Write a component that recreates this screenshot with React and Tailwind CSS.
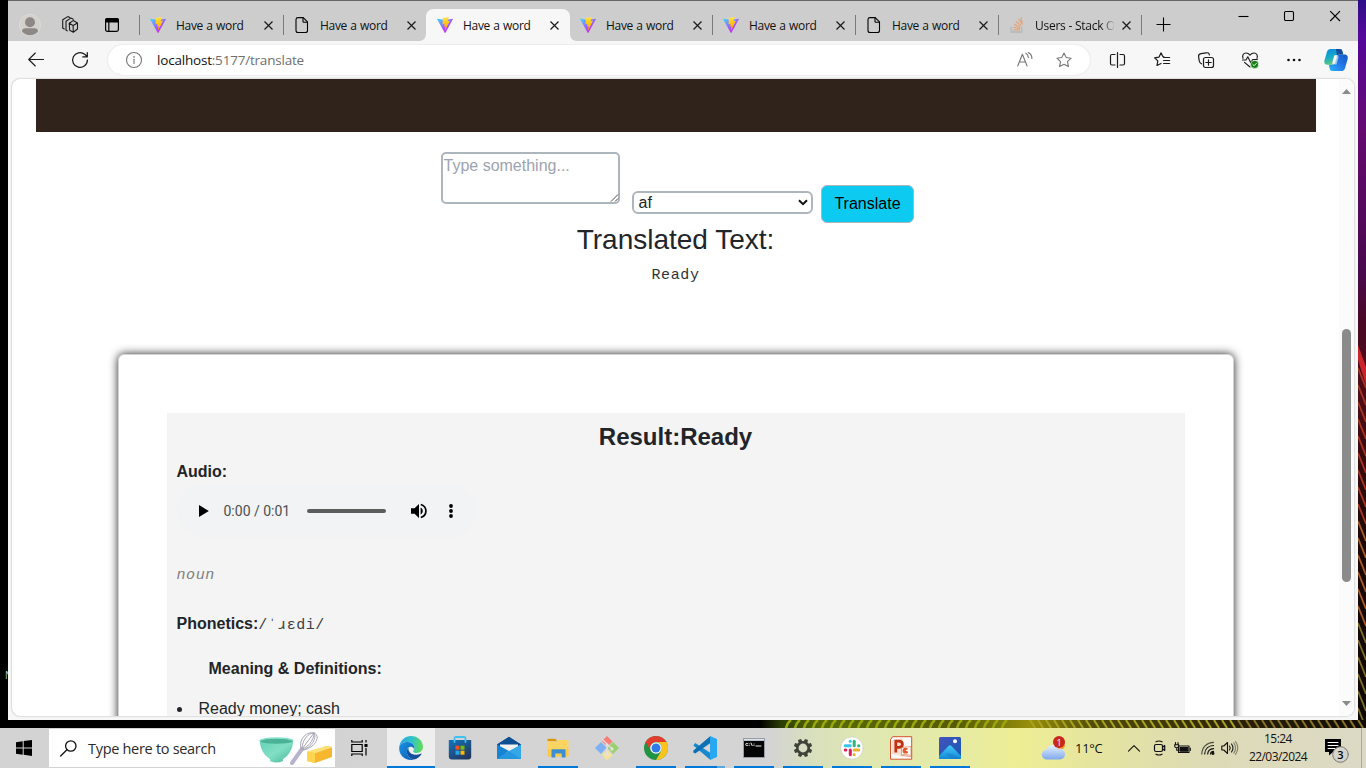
import React from "react";

function Svg({ w = 20, h = w, vb, className = "", children, ...rest }) {
  return (
    <svg
      width={w}
      height={h}
      viewBox={vb || `0 0 ${w} ${h}`}
      fill="none"
      stroke="currentColor"
      strokeWidth="1.1"
      strokeLinecap="round"
      strokeLinejoin="round"
      className={"block shrink-0 overflow-visible " + className}
      {...rest}
    >
      {children}
    </svg>
  );
}

/* ---------- favicons ---------- */

function ViteIcon() {
  return (
    <Svg w={16} vb="0 0 256 257" stroke="none">
      <defs>
        <linearGradient id="viteBody" x1="-.8%" x2="57.6%" y1="7.7%" y2="78.4%">
          <stop offset="0" stopColor="#41d1ff" />
          <stop offset="1" stopColor="#bd34fe" />
        </linearGradient>
        <linearGradient id="viteBolt" x1="43.4%" x2="50.3%" y1="2.2%" y2="89%">
          <stop offset="0" stopColor="#ffea83" />
          <stop offset=".083" stopColor="#ffdd35" />
          <stop offset="1" stopColor="#ffa800" />
        </linearGradient>
      </defs>
      <path
        fill="url(#viteBody)"
        d="M255.153 37.938L134.897 252.976c-2.483 4.44-8.862 4.466-11.382.048L.875 37.958c-2.746-4.814 1.371-10.646 6.827-9.67l120.385 21.517a6.537 6.537 0 0 0 2.322-.004l117.867-21.483c5.438-.991 9.574 4.796 6.877 9.62Z"
      />
      <path
        fill="url(#viteBolt)"
        d="M185.432.063L96.44 17.501a3.268 3.268 0 0 0-2.634 3.014l-5.474 92.456a3.268 3.268 0 0 0 3.997 3.378l24.777-5.718c2.318-.535 4.413 1.507 3.936 3.838l-7.361 36.047c-.495 2.426 1.782 4.5 4.151 3.78l15.304-4.649c2.372-.72 4.652 1.36 4.15 3.788l-11.698 56.621c-.732 3.542 3.979 5.473 5.943 2.437l1.313-2.028l72.516-144.72c1.215-2.423-.88-5.186-3.54-4.672l-25.505 4.922c-2.396.462-4.435-1.77-3.759-4.114l16.646-57.705c.677-2.35-1.37-4.583-3.769-4.113Z"
      />
    </Svg>
  );
}

function DocIcon() {
  return (
    <Svg w={16} className="text-black">
      <path d="M4 .6h5.2l4.3 4.3v8.6a2 2 0 0 1-2 2H4a2 2 0 0 1-2-2v-11a2 2 0 0 1 2-1.9Z" />
      <path d="M9 .8v3.6a.8.8 0 0 0 .8.8h3.500" />
    </Svg>
  );
}

function StackIcon() {
  return (
    <Svg w={16} strokeLinecap="butt" strokeWidth="1.3">
      <path stroke="#b4b6b8" d="M2.200 10v5h10.600v-5" />
      <path stroke="#e2a67b" d="M4.200 12.800h6.800M4.400 10.200l6.700 1.300M5.200 7.300l6.200 2.800M6.900 4.400l5.300 4.200M9.500 2l4.100 5.300M12 .300l1.200 6.200" />
    </Svg>
  );
}

function CloseX() {
  return (
    <Svg w={9} strokeWidth="1.2" strokeLinecap="butt" className="text-[#1a1a1a]">
      <path d="M.5.500l8 8M8.500.500l-8 8" />
    </Svg>
  );
}

/* ---------- browser chrome ---------- */

const tabs = [
  { icon: "vite", title: "Have a word", divider: true, first: true },
  { icon: "doc", title: "Have a word", divider: true },
  { icon: "vite", title: "Have a word", active: true },
  { icon: "vite", title: "Have a word" },
  { icon: "vite", title: "Have a word", divider: true },
  { icon: "doc", title: "Have a word", divider: true },
  { icon: "stack", title: "Users - Stack O", divider: true, fade: true },
];

function Tab({ icon, title, divider, first, active, fade }) {
  return (
    <div className={"relative flex h-8 shrink-0 items-center " + (first ? "w-36" : "w-[143px]")}>
      {active && (
        <svg className="absolute -left-2 top-0" width="160" height="32" viewBox="0 0 160 32">
          <path
            fill="#f7f7f7"
            d="M0 32c5.500 0 8-2.500 8-8V8c0-5 3-8 8-8h128c5 0 8 3 8 8v16c0 5.500 2.500 8 8 8Z"
          />
        </svg>
      )}
      <div className={"h-5 w-px shrink-0 " + (divider ? "bg-[#7a7a7a]" : "bg-transparent")} />
      <div className="relative ml-[10px] flex h-4 w-4 shrink-0 items-center justify-center">
        {icon === "vite" && <ViteIcon />}
        {icon === "doc" && <DocIcon />}
        {icon === "stack" && <StackIcon />}
      </div>
      <div className="relative ml-[10px] mt-px flex h-[18px] w-[79px] shrink-0 items-center overflow-hidden whitespace-nowrap font-['Open_Sans','Noto_Sans',sans-serif] text-[12px] leading-[18px] text-[#111]">
        {fade ? (
          <span className="bg-gradient-to-r from-[#111] from-82% to-[#cdcdcd] bg-clip-text tracking-[-0.25px] text-transparent">
            {title}
          </span>
        ) : (
          <span className="tracking-[-0.3px] [word-spacing:0.5px]">{title}</span>
        )}
      </div>
      <div className={"relative " + (first ? "ml-[9px]" : "ml-[8px]")}>
        <CloseX />
      </div>
    </div>
  );
}

function TabStrip() {
  return (
    <div className="flex h-10 shrink-0 items-start bg-[#cdcdcd]">
      <div className="flex w-11 justify-center pt-[13px]">
        <Svg w={22} stroke="none">
          <circle cx="11" cy="11" r="10.600" fill="#d4d1cd" stroke="#dedcd9" strokeWidth=".8" />
          <circle cx="11" cy="8.300" r="5" fill="#8c8885" />
          <path d="M3 17.600c0-2.400 1.400-3.300 3.600-3.300h8.800c2.200 0 3.600.9 3.600 3.300a10.500 10.500 0 0 1-16 0Z" fill="#8c8885" />
        </Svg>
      </div>
      <div className="flex w-9 justify-center pt-[15px]">
        <Svg w={18} className="text-[#1a1a1a]">
          <path d="M8.200 7.200l4-2.600 4.300 2.400v6l-4.200 3.200-3.600-2L8.200 7.200Zm0 0l3.900 2.300 4.400-2.500M12.100 9.500l.2 6.700" />
          <path d="M6.300 14.900L5 14V5.300L9.800 2.100l2.500 1.200M3.300 13L1.700 12V3.800L6.800.600l2 .9" />
        </Svg>
      </div>
      <div className="flex w-12 justify-center pt-[17px]">
        <Svg w={14} strokeWidth="1.2" className="text-black">
          <rect x=".6" y=".6" width="12.800" height="12.800" rx="1.800" />
          <path d="M.6 1.800Q.8.600 2 .600h10q1.200 0 1.400 1.200V4H.6Z" fill="currentColor" />
          <path d="M3.800 4v9" />
        </Svg>
      </div>
      <div className="ml-[3px] flex pt-2">
        {tabs.map((t, i) => (
          <Tab key={i} {...t} />
        ))}
      </div>
      <div className="mt-[14px] h-5 w-px bg-[#7a7a7a]" />
      <Svg w={14} className="ml-[14px] mt-[16px] text-black" strokeLinecap="butt">
        <path d="M7.500 .500v14M.5 7.500h14" />
      </Svg>
      <div className="ml-auto flex items-start pr-px text-black">
        <div className="flex h-[30px] w-[46px] items-center justify-center">
          <Svg w={10} strokeLinecap="butt">
            <path d="M-.500 5.500h10" />
          </Svg>
        </div>
        <div className="flex h-[30px] w-[46px] items-center justify-center">
          <Svg w={10}>
            <rect x="-.500" y=".5" width="9" height="9" rx="1.200" />
          </Svg>
        </div>
        <div className="flex h-[30px] w-[44px] items-center justify-center">
          <Svg w={10} strokeLinecap="butt">
            <path d="M.2.200l9.800 9.800M10 .200L.2 10" />
          </Svg>
        </div>
      </div>
    </div>
  );
}

function ToolCell({ children }) {
  return <div className="flex h-9 w-11 shrink-0 items-center justify-center text-[#1b1b1b]">{children}</div>;
}

const starPath = "M8 1l2.200 4.500 4.900.700-3.600 3.500.9 4.900L8 12.300l-4.400 2.300.9-4.900L.9 6.200l4.900-.7L8 1Z";

function Toolbar() {
  return (
    <div className="flex h-[38px] shrink-0 items-center bg-[#f7f7f7] pl-[6px]">
      <ToolCell>
        <Svg w={16}>
          <path d="M15.500 7.500H.7M7.300 1L.7 7.500l6.600 6.500" />
        </Svg>
      </ToolCell>
      <ToolCell>
        <Svg w={16} strokeWidth="1.250">
          <path d="M15.400 8A7.400 7.400 0 1 1 12.700 2.300L15.300 4.700M15.300.500v4.400h-4.500" />
        </Svg>
      </ToolCell>
      <div className="ml-[6px] flex h-[30px] w-[982px] shrink-0 items-center rounded-full bg-white shadow-[0_0_2px_rgba(0,0,0,0.14)]">
        <Svg w={16} className="ml-[18px] text-[#767676]">
          <circle cx="8" cy="8" r="7.500" />
          <path d="M8 7.200v4.300" />
          <circle cx="8" cy="4.900" r=".8" fill="currentColor" stroke="none" />
        </Svg>
        <div className="ml-[15px] font-['Open_Sans','Noto_Sans',sans-serif] text-[13.5px] leading-5 tracking-[-0.2px] text-[#6f6f6f]">
          <span className="text-[#111]">localhost</span>:5177/translate
        </div>
        <Svg w={16} className="ml-auto text-[#767676]">
          <path d="M.7 14L5.400 2.300 10.100 14M2.300 10h6.200M8.900 1.200c1.500.8 2.400 2.300 2.400 4.200M11.200.500c2.300 1.100 3.700 3.400 3.700 5.900" />
        </Svg>
        <Svg w={16} className="ml-[23px] mr-[18px] text-[#767676]">
          <path d={starPath} />
        </Svg>
      </div>
      <div className="ml-[6px] flex">
        <ToolCell>
          <Svg w={16}>
            <path d="M5 2.500H2Q.5 2.500.5 4v7.500q0 1.500 1.500 1.500h3M10 2.500h3q1.500 0 1.500 1.500v7.500q0 1.500-1.500 1.500h-3M7.500 .500v15" strokeWidth="1.200" />
          </Svg>
        </ToolCell>
        <ToolCell>
          <Svg w={16}>
            <path d="M10 4.900L9 4.700 7 .900 4.900 5.200l-4.300.6 3.200 3.100-.8 4.600 4-2M9.600 8.500h6M9.600 11.500h6M9.600 5.500h6" strokeWidth="1.200" />
          </Svg>
        </ToolCell>
        <ToolCell>
          <Svg w={16}>
            <rect x="5.500" y="5.500" width="10" height="10" rx="2" strokeWidth="1.200" />
            <path d="M10.500 7.800v5.400M7.800 10.500h5.400M3.600 11.800C2 11.500 1.600 10.500 1.300 9.200L.6 4.900C.3 3 1.300 2 3 1.700L8.300.800c1.700-.3 2.800.3 3.100 2.200" strokeWidth="1.200" />
          </Svg>
        </ToolCell>
        <ToolCell>
          <Svg w={16}>
            <path d="M1 6.300C-.2 3.200 1.600 1 4 1c2 0 3.200 1.100 4 2.100C8.800 2.100 10 1 12 1c2.400 0 4.200 2.200 3 5.300M.5 8H4l1.800-3.200 3 6L10.700 7.500h4.600M2.500 10.400L8 15" strokeWidth="1.150" />
            <circle cx="12.600" cy="12.400" r="4" fill="#128012" stroke="#f7f7f7" strokeWidth=".6" />
            <path d="M10.900 12.600l1.200 1.100 2.200-2.300" stroke="#fff" strokeWidth="1" />
          </Svg>
        </ToolCell>
        <ToolCell>
          <Svg w={16} stroke="none">
            <circle cx="2.500" cy="8" r="1.300" fill="#111" />
            <circle cx="8" cy="8" r="1.300" fill="#111" />
            <circle cx="13.500" cy="8" r="1.300" fill="#111" />
          </Svg>
        </ToolCell>
        <div className="flex w-10 items-center justify-center">
          <CopilotIcon />
        </div>
      </div>
    </div>
  );
}

function CopilotIcon() {
  return (
    <Svg w={24} stroke="none">
      <defs>
        <linearGradient id="copA" x1="0" x2=".3" y1="0" y2="1">
          <stop offset="0" stopColor="#0d88dd" />
          <stop offset=".55" stopColor="#16abc9" />
          <stop offset="1" stopColor="#5ec97a" />
        </linearGradient>
        <linearGradient id="copB" x1="1" x2="0" y1="0" y2="1">
          <stop offset="0" stopColor="#1456c4" />
          <stop offset=".5" stopColor="#2279ea" />
          <stop offset="1" stopColor="#29b5f6" />
        </linearGradient>
      </defs>
      <path d="M6.500 1h9.200c1.400 0 2.200.8 2.600 2.200l.9 3.300h-3.500c-1.800 0-2.700.8-3.200 2.600L11 14.300c-.5 1.700-1.500 2.400-3.200 2.400H3.300C.8 16.700-.2 14.700.5 12.200L3 3.800C3.600 1.900 4.800 1 6.500 1Z" fill="url(#copA)" />
      <path d="M17.500 23H8.300c-1.400 0-2.200-.8-2.600-2.200l-.9-4.100h3.500c1.800 0 2.700-.8 3.200-2.600L13 9.500c.5-1.900 1.500-2.900 3.200-2.900h4.500c2.500 0 3.600 2.200 2.900 4.700L21 20.200c-.6 1.900-1.800 2.800-3.500 2.800Z" fill="url(#copB)" />
      <path d="M12 1h3.900c1.400 0 2.200.8 2.500 2.200l.9 3.400h-3.500c-1.500 0-2.300.5-2.800 1.400Z" fill="#174c9c" />
      <path d="M10.300 7.200h2.900l-2.600 8.600H8Z" fill="#f7f7f7" />
      <path d="M13.200 8.500h1.600l-2.400 8h-1.800Z" fill="#f7f7f7" opacity=".6" />
    </Svg>
  );
}

/* ---------- web page ---------- */

function TranslateForm() {
  return (
    <div className="flex pt-5">
      <div className="ml-[429px] flex h-[52px] w-[179px] justify-between rounded-[5px] border-2 border-[#adb5bd] bg-white pl-[0.5px]">
        <span className="h-6 text-[16px] leading-[23px] text-[#9ca3af]">Type something...</span>
        <Svg w={9} className="mr-[-0.5px] self-end text-[#333]" strokeWidth=".9" strokeLinecap="butt">
          <path d="M1 8.500l7-7M5 8.500l3-3" />
        </Svg>
      </div>
      <div className="ml-3 mt-[39px] flex h-[23px] w-[181px] items-center justify-between rounded-[6px] border-2 border-[#adb5bd] bg-white pl-[4.5px] pr-[3px] text-[16px] leading-[19px] text-[#212529]">
        <span>af</span>
        <Svg w={10} h={6} strokeWidth="2" strokeLinecap="butt" strokeLinejoin="miter" className="text-[#111]">
          <path d="M1 .200l4 4 4-4" />
        </Svg>
      </div>
      <div className="ml-2 mt-[33px] flex h-[38px] w-[93px] items-center justify-center rounded-[6px] border border-[#adb5bd] bg-[#0dcaf0] text-[16px] text-black">
        Translate
      </div>
    </div>
  );
}

function AudioPlayer() {
  return (
    <div className="flex h-[54px] w-[300px] items-center rounded-full bg-[#f1f3f4]">
      <svg className="ml-[22px] block" width="10" height="12" viewBox="0 0 10 12">
        <path d="M0 0v12l9.800-6Z" fill="#000" />
      </svg>
      <span className="ml-[15px] w-[67px] whitespace-nowrap font-[Roboto,sans-serif] text-[14px] leading-5 text-[#4c4f51]">0:00 / 0:01</span>
      <div className="ml-[16px] h-1 w-[79px] rounded-full bg-[#5b5d5d]" />
      <svg className="ml-[24px] block" width="18" height="18" viewBox="0 0 18 18">
        <path d="M1 6.300v5.400h3.600L9 16V2L4.600 6.300Z" fill="#000" />
        <path d="M10.600 5.600c2.900 1.300 2.900 5.500 0 6.800Z" fill="#000" />
        <path d="M10.800 2.500c6.800 2.200 6.800 10.800 0 13" fill="none" stroke="#000" strokeWidth="1.700" />
      </svg>
      <svg className="ml-[21px] block" width="4" height="14" viewBox="0 0 4 14">
        <circle cx="2" cy="2" r="1.900" />
        <circle cx="2" cy="7" r="1.900" />
        <circle cx="2" cy="12" r="1.900" />
      </svg>
    </div>
  );
}

function ResultCard() {
  return (
    <div className="ml-[106px] mt-[66px] h-[700px] w-[1116px] shrink-0 rounded-[6px] border border-[#d0d2d4] bg-white px-12 pt-[58px] shadow-[0_0_10px_rgba(0,0,0,0.85)]">
      <div className="h-[600px] bg-[#f4f4f4] pl-[9.5px] pr-[10.5px] pt-[9px]">
        <h2 className="h-[29px] text-center text-[24px] font-bold leading-[29px]">Result:Ready</h2>
        <div className="mt-[9px] h-6 text-[16px] font-bold leading-6">Audio:</div>
        <AudioPlayer />
        <div className="mt-[26px] h-6 font-['Liberation_Mono',monospace] text-[15px] italic leading-6 tracking-[0.6px] text-[#808080]">noun</div>
        <div className="mt-6 h-6 text-[16px] leading-6">
          <span className="font-bold">Phonetics:</span>
          <span className="font-['Liberation_Mono',monospace] text-[15px] tracking-[0.5px] text-[#3c4043]">/ˈɹɛdi/</span>
        </div>
        <div className="mt-[21px] h-6 pl-8 text-[16px] font-bold leading-6">Meaning &amp; Definitions:</div>
        <div className="mt-4 flex h-6 items-center text-[16px] leading-6">
          <span className="mt-px h-[5px] w-[5px] rounded-full bg-[#212529]" />
          <span className="ml-[17px]">Ready money; cash</span>
        </div>
      </div>
    </div>
  );
}

function Page() {
  return (
    <div className="mx-1 mb-1 flex h-[637px] overflow-hidden rounded-lg bg-white shadow-[0_0_2px_rgba(0,0,0,0.35)]">
      <div className="flex h-[637px] w-[1327px] shrink-0 flex-col overflow-hidden font-['Liberation_Sans',Arial,sans-serif] text-[#212529]">
        <div className="mx-6 h-[53px] w-[1280px] shrink-0 bg-[#30231c]" />
        <TranslateForm />
        <h2 className="h-[34px] text-center text-[28px] leading-[34px]">Translated Text:</h2>
        <div className="mt-[7px] h-6 text-center font-['Liberation_Mono',monospace] text-[15px] leading-6 tracking-[0.6px] text-[#303438]">Ready</div>
        <ResultCard />
      </div>
      <div className="flex h-full w-[15px] shrink-0 flex-col items-center bg-[#fbfbfb]">
        <svg className="mt-[10px] block" width="9" height="5" viewBox="0 0 9 5">
          <path d="M0 5L4.500 0 9 5Z" fill="#8b8b8b" />
        </svg>
        <div className="mt-[235px] h-[253px] w-[9px] rounded-full bg-[#8b8b8b]" />
        <svg className="mt-[119px] block" width="9" height="5" viewBox="0 0 9 5">
          <path d="M0 0h9L4.500 5Z" fill="#8b8b8b" />
        </svg>
      </div>
    </div>
  );
}

/* ---------- desktop wallpaper slivers ---------- */

function RightWallpaper() {
  return (
    <svg className="block h-[720px] w-2 shrink-0" viewBox="0 0 8 720" preserveAspectRatio="none">
      <defs>
        <linearGradient id="wallR" x1="0" x2="0" y1="0" y2="1">
          <stop offset="0" stopColor="#2d0f86" />
          <stop offset=".05" stopColor="#54089a" />
          <stop offset=".18" stopColor="#640a70" />
          <stop offset=".38" stopColor="#480a4c" />
          <stop offset=".45" stopColor="#4a0824" />
          <stop offset=".55" stopColor="#4d0d17" />
          <stop offset=".75" stopColor="#1d0805" />
          <stop offset="1" stopColor="#0c0903" />
        </linearGradient>
      </defs>
      <rect width="8" height="720" fill="url(#wallR)" />
      <path d="M0 345l8 22v18l-8-25Z" fill="#c9252b" />
      {Array.from({ length: 21 }, (_, i) => {
        const y = 368 + i * 17;
        return <path key={i} d={`M0 ${y}L8 ${y + 20}`} stroke={i < 9 ? "#a83422" : i < 15 ? "#a55a28" : "#7d6c29"} strokeWidth="1.800" />;
      })}
    </svg>
  );
}

function BottomWallpaper() {
  return (
    <svg className="block h-2 w-full shrink-0" viewBox="0 0 1366 8" preserveAspectRatio="none">
      <defs>
        <linearGradient id="wallB" x1="0" x2="1" y1="0" y2="0">
          <stop offset="0" stopColor="#000" />
          <stop offset=".556" stopColor="#000" />
          <stop offset=".572" stopColor="#2c3d05" />
          <stop offset=".6" stopColor="#576a06" />
          <stop offset=".7" stopColor="#555a08" />
          <stop offset=".755" stopColor="#96900c" />
          <stop offset=".8" stopColor="#514d08" />
          <stop offset=".9" stopColor="#2b2306" />
          <stop offset="1" stopColor="#100b03" />
        </linearGradient>
      </defs>
      <rect width="1366" height="8" fill="url(#wallB)" />
      {Array.from({ length: 25 }, (_, i) => {
        const x = 786 + i * 9;
        return <path key={i} d={`M${x} 8q1-5 5-8`} fill="none" stroke="#98a80c" strokeWidth="2.600" />;
      })}
      {Array.from({ length: 42 }, (_, i) => {
        const x = 1030 + i * 8;
        return <path key={"r" + i} d={`M${x} 0l5 8`} stroke={i < 26 ? "#aaa120" : "#87712c"} strokeWidth="2" />;
      })}
    </svg>
  );
}

/* ---------- taskbar ---------- */

function AppCell({ children, active, running, split }) {
  return (
    <div className={"mr-px flex h-10 w-12 shrink-0 flex-col items-center " + (active ? "bg-[#eeeeee]" : "")}>
      <div className="flex h-[38px] items-center justify-center pt-[2px]">{children}</div>
      {active && <div className="h-[2px] w-12 bg-[#0078d7]" />}
      {running && !split && <div className="h-[2px] w-10 bg-[#0078d7]" />}
      {split && (
        <div className="flex h-[2px] w-10">
          <div className="w-8 bg-[#0078d7]" />
          <div className="w-2 bg-[#5aa6df]" />
        </div>
      )}
    </div>
  );
}

function EdgeIcon() {
  return (
    <Svg w={24} stroke="none">
      <defs>
        <linearGradient id="edTop" x1="0" x2="1" y1=".4" y2=".5">
          <stop offset="0" stopColor="#2aa7e8" />
          <stop offset=".5" stopColor="#2fc2c8" />
          <stop offset="1" stopColor="#63dd58" />
        </linearGradient>
        <linearGradient id="edL" x1="0" x2="1" y1="0" y2="1">
          <stop offset="0" stopColor="#1b91e0" />
          <stop offset="1" stopColor="#0b5fb8" />
        </linearGradient>
      </defs>
      <path d="M.4 10.500C1.200 4.300 6 0 12 0c7 0 12 5 12 10.800 0 4-3 6.200-6.200 6.200-2.300 0-3.700-.8-3.700-1.600 0-.7 1.300-1.300 1.300-3.400C15.400 8.500 12 6 8 6 4.800 6 1.800 7.700.4 10.500Z" fill="url(#edTop)" />
      <path d="M.3 10.600C1.800 7.600 4.800 6 8 6c4 0 7.400 2.500 7.400 6 0 .5-.1 1-.3 1.400-.4-1.400-1.500-2.600-3.100-2.600-2.300 0-4.200 2-4.200 4.800 0 4.200 3.200 7.200 7 8.100-.9.200-1.800.3-2.800.3C5 24-.7 18.500.3 10.600Z" fill="url(#edL)" />
      <path d="M9.500 11.700c-1 .9-1.700 2.300-1.700 3.900 0 4.200 3.200 7.300 7 8 3.200-.8 5.800-2.700 7.500-5.200.4-.6-.1-1-.7-.7-4.300 2.200-10.600 1-12-3.500-.2-.8-.3-1.700-.1-2.500Z" fill="#15529b" />
    </Svg>
  );
}

function StoreIcon() {
  return (
    <Svg w={24} stroke="none">
      <defs>
        <linearGradient id="store" x1="0" x2=".7" y1="0" y2="1">
          <stop offset="0" stopColor="#1374bd" />
          <stop offset="1" stopColor="#233860" />
        </linearGradient>
      </defs>
      <path d="M.8 4h22.400v16.500q0 3-3 3H3.800q-3 0-3-3Z" fill="url(#store)" />
      <path d="M6.500 6V2.500Q6.500 1 8 1h8q1.500 0 1.500 1.500V6" fill="none" stroke="#3fc0f2" strokeWidth="1.800" />
      <path d="M7.500 9.700h4v4h-4Z" fill="#f25022" />
      <path d="M12.500 9.700h4v4h-4Z" fill="#7fba00" />
      <path d="M7.500 14.700h4v4h-4Z" fill="#22a6ec" />
      <path d="M12.500 14.700h4v4h-4Z" fill="#ffb900" />
    </Svg>
  );
}

function MailIcon() {
  return (
    <Svg w={24} stroke="none">
      <path d="M0 8.500L12 1l12 7.500V23H0Z" fill="#0d4f93" />
      <path d="M3 8h18v8L12 20 3 14Z" fill="#f2f2f2" />
      <path d="M0 8.500L12 15 0 23Z" fill="#1684d2" />
      <path d="M24 8.500V23H0l12-8Z" fill="#35a7e8" />
      <path d="M0 23l12-8 12 8Z" fill="#2497df" />
      <path d="M0 8.500L12 .700l12 7.800Z" fill="#0d4f93" />
    </Svg>
  );
}

function FolderIcon() {
  return (
    <Svg w={24} stroke="none">
      <path d="M1.500 3.500q0-.8.8-.8h7l2 2.500H1.500Z" fill="#d9980c" />
      <path d="M1.500 5.500h9.500l1-1.500h10.500v16.500h-21Z" fill="#fcd462" />
      <path d="M1.500 13h21v7.500h-21Z" fill="#fbc94c" />
      <path d="M5.500 21.500v-7.200q0-1 1-1h12q1 0 1 1v7.200h-3.800V17.500H9.300v4Z" fill="#3b8ed0" />
    </Svg>
  );
}

function GitIcon() {
  return (
    <Svg w={26} stroke="none">
      <path d="M8 6l5-5 5.500 5.500L13 12Z" fill="#f57f77" />
      <path d="M1 13l6-6 5.500 5.500L7 19Z" fill="#7eb0f5" />
      <path d="M19 7l6 6-6 6-5.500-6Z" fill="#98d06c" />
      <path d="M8 20l5-5.500 5.500 5.500-5.500 5.500Z" fill="#f4e39a" />
      <path d="M9 5l4 4v11M13 9.500l5 4" fill="none" stroke="#dedede" strokeWidth="1.300" />
      <circle cx="13" cy="10" r="1.600" fill="#e2e2e2" />
      <circle cx="18" cy="14" r="1.700" fill="#e2e2e2" />
      <circle cx="13" cy="19" r="1.700" fill="#e2e2e2" />
    </Svg>
  );
}

function ChromeIcon() {
  return (
    <Svg w={24} stroke="none">
      <circle cx="12" cy="12" r="12" fill="#229342" />
      <path d="M12 24l5.200-9A6 6 0 0 0 12 6h10.400A12 12 0 0 1 12 24Z" fill="#fcc31e" />
      <path d="M1.600 6L6.800 15A6 6 0 0 1 12 6h10.400A12 12 0 0 0 1.600 6Z" fill="#e33b2e" />
      <circle cx="12" cy="12" r="5.800" fill="#fff" />
      <circle cx="12" cy="12" r="4.500" fill="#2f7be9" />
    </Svg>
  );
}

function CodeIcon() {
  return (
    <Svg w={24} stroke="none">
      <path d="M.4 9.400L2.200 7 17.500 17v7L.4 9.400Z" fill="#1787ce" />
      <path d="M.4 14.600L17.500 0v7L2.200 17.600.4 16.500Z" fill="#0b70b4" />
      <path d="M17 0l7 3v18l-7 3Z" fill="#28a8f0" />
    </Svg>
  );
}

function CmdIcon() {
  return (
    <Svg w={24} stroke="none">
      <rect x="1" y="2" width="22" height="20" fill="#959ea7" />
      <path d="M2 3h20v1.500H2Z" fill="#dce3e8" />
      <rect x="2" y="5" width="20" height="16" fill="#050505" />
      <path d="M5.500 7.500Q3.700 6.600 3.700 8.500t1.800 1M7.200 7.800v.1M7.200 9.500v.1M9 7l1.200 2.700M12 8v.1M12 9.500v.1M14 10h5" fill="none" stroke="#eee" strokeWidth="1" />
    </Svg>
  );
}

function GearIcon() {
  return (
    <Svg w={20} stroke="none">
      {[0, 45, 90, 135, 180, 225, 270, 315].map((a) => (
        <path key={a} d="M8.400.800h3.200l.5 3.500H7.900Z" fill="#3f4238" transform={`rotate(${a + 22.5} 10 10)`} />
      ))}
      <circle cx="10" cy="10" r="5.700" fill="none" stroke="#3f4238" strokeWidth="2.600" />
    </Svg>
  );
}

function SlackIcon() {
  return (
    <Svg w={24} stroke="none">
      <circle cx="12" cy="12" r="11.300" fill="#fff" stroke="#c7c9b8" strokeWidth=".7" />
      <rect x="8.800" y="3.700" width="3" height="3" rx="1.500" fill="#36c5f0" />
      <rect x="3.700" y="8.200" width="8.100" height="3" rx="1.500" fill="#36c5f0" />
      <rect x="12.700" y="3.700" width="3" height="7.500" rx="1.500" fill="#2eb67d" />
      <rect x="17" y="8.200" width="3.300" height="3" rx="1.500" fill="#2eb67d" />
      <rect x="12.700" y="12.600" width="7.600" height="3" rx="1.500" fill="#ecb22e" />
      <rect x="12.700" y="17" width="3" height="3.300" rx="1.500" fill="#ecb22e" />
      <rect x="8.800" y="12.600" width="3" height="7.600" rx="1.500" fill="#e01e5a" />
      <rect x="3.700" y="12.600" width="3.600" height="3" rx="1.500" fill="#e01e5a" />
    </Svg>
  );
}

function PowerPointIcon() {
  return (
    <Svg w={24} stroke="none">
      <path d="M4 .700h18.700v22.500H1.500V4Z" fill="#fff" stroke="#d5532c" strokeWidth="1" />
      <path d="M2.500 4.500L14 2v18.500L2.500 18Z" fill="#f9dfd2" />
      <path d="M6.800 16.500V5.200h3c4.800 0 4.800 6.200 0 6.200h-3" fill="none" stroke="#bf3313" strokeWidth="2.800" strokeLinejoin="miter" strokeLinecap="butt" />
      <path d="M13 11.500l9-1v10l-9-1Z" fill="#fff" stroke="#dd744c" strokeWidth=".7" />
      <circle cx="16.500" cy="14.700" r="2.900" fill="#e05c2c" />
      <path d="M16.500 14.500l3.500-2v3.500Z" fill="#fff" />
      <path d="M14 18.500l6.500.6" stroke="#e6926d" strokeWidth=".9" />
    </Svg>
  );
}

function PhotosIcon() {
  return (
    <Svg w={24} stroke="none">
      <defs>
        <linearGradient id="photo" x1="0" x2="1" y1="0" y2="1">
          <stop offset="0" stopColor="#4353c0" />
          <stop offset="1" stopColor="#1759ae" />
        </linearGradient>
        <linearGradient id="photoM" x1="0" x2="0" y1="0" y2="1">
          <stop offset="0" stopColor="#43c8f5" />
          <stop offset="1" stopColor="#1488d9" />
        </linearGradient>
      </defs>
      <rect x="1" y="1" width="22" height="22" rx="1.500" fill="url(#photo)" />
      <path d="M1 20L10.500 10q1.500-1.500 3 0L23 20v1.500Q23 23 21.500 23h-19Q1 23 1 21.500Z" fill="url(#photoM)" />
      <path d="M14 18l9 5h-9L7 17Z" fill="#1071c4" opacity=".35" />
      <circle cx="17" cy="5.200" r="2" fill="#fff" />
    </Svg>
  );
}

function BakingArt() {
  return (
    <Svg w={74} h={36} stroke="none">
      <defs>
        <linearGradient id="bowl" x1="0" x2="1" y1="0" y2="1">
          <stop offset="0" stopColor="#67d2b6" />
          <stop offset=".5" stopColor="#81dfc5" />
          <stop offset="1" stopColor="#49b698" />
        </linearGradient>
      </defs>
      <path d="M1 11h33c0 9-5 15-10 18v2q-6.500 3-13 0v-2C5 25 1 19 1 11Z" fill="url(#bowl)" />
      <ellipse cx="17.500" cy="11" rx="16.800" ry="2.800" fill="#4bb297" />
      <path d="M1 10.500c5-3.500 28-3.500 33 0" fill="none" stroke="#85e0c8" strokeWidth="1.500" />
      <path d="M33 33l10-14" stroke="#b8b2cc" strokeWidth="4" strokeLinecap="round" />
      <g fill="none" stroke="#a9a5b5" strokeWidth="1">
        <path d="M42 19C39 8 49 1 55 3s4 13-10 17M43 19C43 10 49 3 55 3c3 5-2 14-11 17M43 19l12-16M43 19c5-1 12-8 12-16" />
      </g>
      <path d="M48 22l20-6 5 1v10l-17 6-8-2Z" fill="#f6b72e" />
      <path d="M48 21.500L67 16l6.500 1.200-17.500 6Z" fill="#ffe17a" />
      <path d="M48 21.500l8 1.700V33l-8-2Z" fill="#ffd44e" />
    </Svg>
  );
}

function Tray() {
  return (
    <>
      <Svg w={26} h={26} stroke="none" className="ml-[66px]">
        <defs>
          <linearGradient id="cloud" x1="0" x2="0" y1="0" y2="1">
            <stop offset="0" stopColor="#e8f1ff" />
            <stop offset="1" stopColor="#7ea9ec" />
          </linearGradient>
        </defs>
        <circle cx="19" cy="10" r="5" fill="#f2a23a" />
        <path d="M6 24.500a5 5 0 0 1-.3-10C6.500 11 9.500 9.500 12.500 10c2.500.4 4 2 4.500 4 4-.7 7 1.500 7 5.300 0 3-2.200 5.200-5 5.200Z" fill="url(#cloud)" />
        <circle cx="18" cy="7" r="6" fill="#c8281e" />
        <text x="18" y="10.500" textAnchor="middle" fontSize="9" fontFamily="Open Sans" fill="#fff">1</text>
      </Svg>
      <span className="ml-[8px] mt-px w-[30px] whitespace-nowrap text-[13px] tracking-[-0.3px]">11°C</span>
      <Svg w={12} h={7} className="ml-[23px]">
        <path d="M.5 6.200L6 .700l5.500 5.500" />
      </Svg>
      <Svg w={14} h={16} className="ml-[13px]">
        <rect x="1.500" y="4.500" width="8" height="7" rx="1.500" strokeWidth="1.200" />
        <path d="M9.700 7l2-1.500v5L9.700 9M3 1.800Q6 .200 9 1.800M3 14.200q3 1.600 6 0" strokeWidth="1.200" />
      </Svg>
      <Svg w={17} h={12} className="ml-[7px]">
        <path d="M4.500 4h10.500v6.500H4.500Z" />
        <path d="M6 5.500h7.800v3.600H6Z" fill="currentColor" />
        <path d="M16.300 6v2.500M1.500.500v2M4 .500v2M.7 2.800h4v1.400q0 1.500-2 1.500t-2-1.500ZM2.700 5.800v2.500h2" />
      </Svg>
      <Svg w={14} h={14} className="ml-[10px]" strokeWidth="1.200">
        <path d="M.8 13C1 6 6 1.500 12.500 1.300" opacity=".7" />
        <path d="M3.700 13c.2-5 3.800-8.300 8.800-8.500M6.700 13c.2-3 2.500-5.200 5.800-5.400M9.500 13c.1-1.500 1.200-2.500 3-2.700" />
        <circle cx="11.900" cy="12.300" r="1" fill="currentColor" />
      </Svg>
      <Svg w={18} h={14} className="ml-[6px]">
        <path d="M.8 5v4h2L6.500 12.500v-11L2.800 5Z" />
        <path d="M8.500 5q1.500 2 0 4M10.500 3q3 4 0 8" />
        <path d="M12.700 1.800q3.800 5.200 0 10.400M14.500 .500q4.500 6.500 0 13" opacity=".45" />
      </Svg>
      <div className="ml-[8px] flex h-10 w-[62px] flex-col items-center whitespace-nowrap pt-[2px] text-[12px] leading-[18px] tracking-[-0.55px]">
        <span>15:24</span>
        <span>22/03/2024</span>
      </div>
      <Svg w={26} h={26} stroke="none" className="ml-[16px] mt-[6px]">
        <path d="M0 1h16v13H8l-4 3.500V14H0Z" fill="#000" />
        <path d="M3 4.500h10M3 7.500h10M3 10.500h7" stroke="#fff" strokeWidth="1" />
        <circle cx="15.500" cy="16.500" r="7.800" fill="#d5d4cc" stroke="#777" strokeWidth="1" />
        <text x="15.500" y="20.500" textAnchor="middle" fontSize="11" fontFamily="Open Sans" fontWeight="600" fill="#000">3</text>
      </Svg>
      <div className="ml-auto mr-1 h-10 w-px bg-[#aaa99e]" />
    </>
  );
}

function Taskbar() {
  return (
    <div className="flex h-10 w-full items-center bg-[linear-gradient(90deg,#d3d3d3_0px,#d4d4d4_770px,#d8dfbd_810px,#dfe7b3_860px,#e6eba4_960px,#eeee94_1015px,#e5e4a0_1100px,#dddbb4_1200px,#dcd9c6_1366px)] font-['Open_Sans','Noto_Sans',sans-serif] text-[#111]">
      <div className="flex w-12 justify-center">
        <svg className="block" width="16" height="16" viewBox="0 0 16 16">
          <path d="M0 2.300L6.700 1.300v6.200H0ZM7.700 1.100L16 0v7.500H7.700ZM0 8.500h6.700v6.200L0 13.700ZM7.700 8.500H16V16l-8.300-1.200Z" fill="#000" />
        </svg>
      </div>
      <div className="ml-px flex h-[38px] w-[286px] items-center bg-white">
        <Svg w={17} h={17} className="ml-[11px] text-[#111]" strokeWidth="1.300">
          <circle cx="10.800" cy="6" r="5.200" />
          <path d="M6.900 9.800L.7 16" />
        </Svg>
        <span className="ml-[11px] mt-[2px] whitespace-nowrap text-[14.5px] leading-5 tracking-[-0.3px] text-[#2b2b2b]">Type here to search</span>
        <div className="ml-auto mr-[2px]">
          <BakingArt />
        </div>
      </div>
      <div className="flex w-[52px] justify-center pr-[3px]">
        <Svg w={17} h={16} strokeLinecap="butt" strokeLinejoin="miter" strokeWidth="1.200" className="text-black">
          <path d="M.8 4.500h10.400v7H.8ZM.8 0v2h10.400V0M.8 16v-2h10.400v2M15 0v2.500M15 8v7.500" />
          <path d="M13.500 4h3v3h-3Z" fill="currentColor" stroke="none" />
        </Svg>
      </div>
      <AppCell active><EdgeIcon /></AppCell>
      <AppCell><StoreIcon /></AppCell>
      <AppCell><MailIcon /></AppCell>
      <AppCell running><FolderIcon /></AppCell>
      <AppCell><GitIcon /></AppCell>
      <AppCell running><ChromeIcon /></AppCell>
      <AppCell running split><CodeIcon /></AppCell>
      <AppCell running><CmdIcon /></AppCell>
      <AppCell running><GearIcon /></AppCell>
      <AppCell running><SlackIcon /></AppCell>
      <AppCell running><PowerPointIcon /></AppCell>
      <AppCell running><PhotosIcon /></AppCell>
      <Tray />
    </div>
  );
}

export default function App() {
  return (
    <div className="flex h-[768px] w-[1366px] flex-col overflow-hidden bg-black">
      <div className="flex h-[720px]">
        <div className="flex h-[720px] w-2 shrink-0 flex-col overflow-hidden pt-[667px]">
          <span className="ml-[5px] font-['Open_Sans',sans-serif] text-[10px] leading-4 text-[#a9d4d8]">N</span>
        </div>
        <div className="flex h-[720px] w-[1350px] shrink-0 flex-col bg-[#f7f7f7]">
          <div className="h-px shrink-0 bg-[#666]" />
          <TabStrip />
          <Toolbar />
          <Page />
        </div>
        <RightWallpaper />
      </div>
      <BottomWallpaper />
      <Taskbar />
    </div>
  );
}
